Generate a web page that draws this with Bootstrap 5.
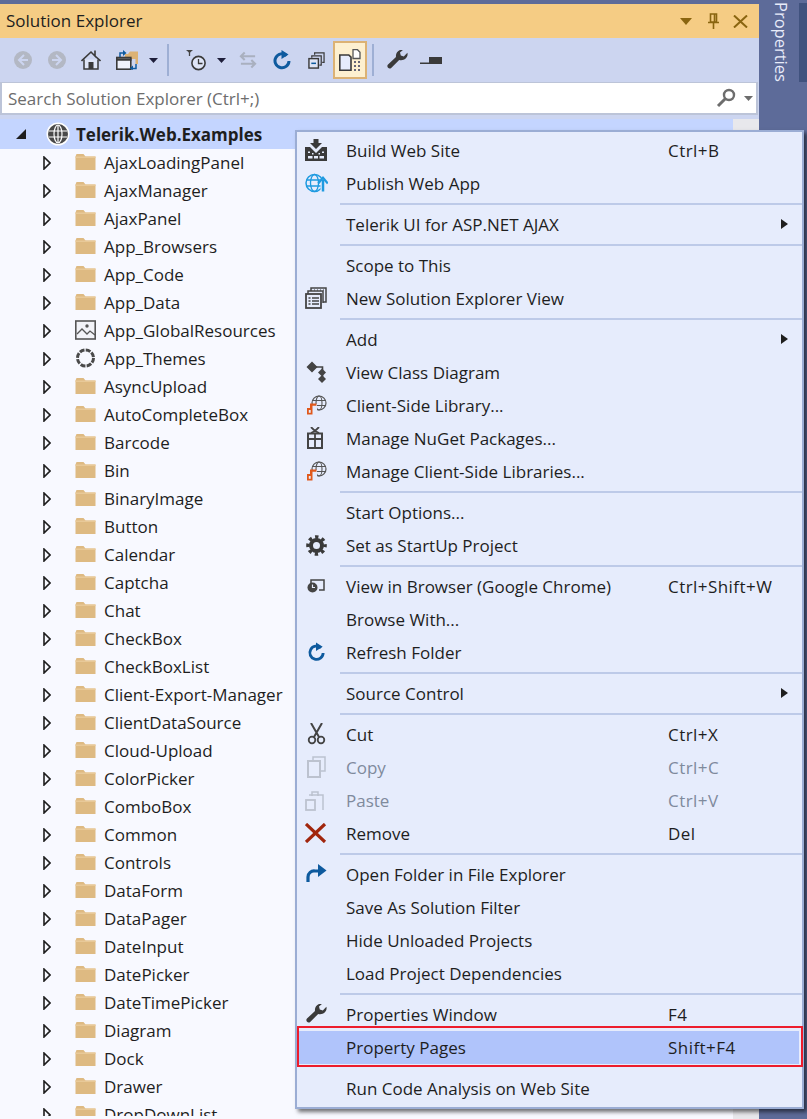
<!DOCTYPE html>
<html lang="en">
<head>
<meta charset="utf-8">
<title>Solution Explorer</title>
<link href="https://cdn.jsdelivr.net/npm/bootstrap@5.3.0/dist/css/bootstrap.min.css" rel="stylesheet">
<style>
html,body{margin:0;height:1119px;overflow:hidden;background:#5d6b99}
body{font-family:"Open Sans","Noto Sans","Liberation Sans",sans-serif;font-size:17px;color:#1e1e1e}
.stage{width:807px;height:1119px;position:relative;overflow:hidden;background:#5d6b99;padding-top:4px}
.panel{width:759px;height:1115px;background:#f8f9ff}
.titlebar{height:34px;background:#f5cc84;padding:0 11px 0 6px}
.titlebar svg{display:block}
.toolbar{height:44px;background:#ccd5f0;padding-left:14px}
.toolbar svg,.tb-sep,.tb-on{flex:none}
.tb-sep{width:2px;height:32px;background:#9eafd4}
.tb-on{width:34px;height:38px;background:#fdf0d0;border:2px solid #dcb274}
.searchwrap{background:#ccd5f0;padding:0 1px 4px 0}
.searchbox{height:33px;background:#fff;border:2px solid #bcc4d8;border-top-width:1.500px;padding:0 3px 0 6px;color:#6d6d6d}
.searchbox .hint{padding-top:2px}
.treeroot{height:30px;background:#c4d5ff;font-weight:700;color:#1e1e1e;padding-left:16px}
.treeroot .rootname{padding-top:2px}
.treearea{height:967px;overflow:hidden}
.treerow{height:28px;white-space:nowrap;padding-left:43px}
.treerow svg.arrow{margin-right:24px;flex:none}
.treerow svg.fold{margin-right:8px;margin-top:-3px;flex:none}
.scrolltrack{position:absolute;left:733px;top:119px;width:26px;height:1000px;background:#e8e8ec}
.sidetab{position:absolute;left:763px;top:0;width:37px;height:82px;writing-mode:vertical-rl;color:#e8ecfa;font-size:16.500px;line-height:37px;white-space:nowrap;padding-top:2px}
.sidestrip{position:absolute;left:799px;top:3px;width:8px;height:79px;background:#40527e}
.ctxmenu{position:absolute;left:295px;top:130px;width:509px;height:979px;background:#e6ecfc;border:2px solid #9badd4;padding:1.500px 0 0 0;box-shadow:3px 3px 4px rgba(0,0,0,.55)}
.mi{height:33px;white-space:nowrap;line-height:33px;position:relative;color:#1e1e1e}
.mi .ico{width:47px;flex:none;padding-left:8px}
.mi .ico.inset1{padding-left:9px}
.mi .ico.inset{padding-left:10px}
.mi .lbl{width:322px;flex:none;margin-left:2px}
.mi .ks{flex:1;letter-spacing:.45px}
.mi .sub{position:absolute;right:14px;top:11.500px;width:0;height:0;border-left:7px solid #1e1e1e;border-top:5px solid transparent;border-bottom:5px solid transparent}
.mi.off{color:#7f8a9c}
.mi.hit{background:#b0c4fb;margin:0 3px 0 1px}
.mi.hit .ico{width:46px}
.msep{height:8px;padding:3px 0 3px 43px}
.msep div{height:2px;background:#bdcae8}
.redbox{position:absolute;left:0;top:894px;width:506px;height:41px;border:2px solid #ed1c2c;pointer-events:none}
</style>
</head>
<body>
<svg width="0" height="0" class="position-absolute">
<defs>
<symbol id="i-fold" viewBox="0 0 20 18"><path d="M0 3.500 1 1h7l2 2.500h10V17H0z" fill="#deba82"/><path d="M0 3.500h20v1.500H0z" fill="#e8c998"/></symbol>
<symbol id="i-arrow" viewBox="0 0 8 14"><path d="M1 1 7 7 1 13z" fill="none" stroke="#1e1e1e" stroke-width="1.600"/></symbol>
<symbol id="i-globe2" viewBox="0 0 20 20"><circle cx="12" cy="8" r="7" fill="#e6ecfc" stroke="#555" stroke-width="1.200"/><ellipse cx="12" cy="8" rx="3" ry="7" fill="none" stroke="#555" stroke-width="1.100"/><path d="M5 5.500h14M5 10.500h14" stroke="#555" stroke-width="1.100"/><path d="M0 9h10v11H0z" fill="#e6ecfc"/><path d="M0 13h3V8.500h6.500v2.200H5.500V19.500H0z" fill="#e0591c"/><path d="M1.800 15h1.900v2.800H1.800z" fill="#e6ecfc"/></symbol>
<symbol id="i-refresh" viewBox="0 0 20 20"><path d="M14.700 5.600A7 7 0 1 0 17 11" fill="none" stroke="#0e5a9e" stroke-width="3"/><path d="M9.500 0v9l7-4.500z" fill="#0e5a9e"/></symbol>
<symbol id="i-wrench" viewBox="0 0 21 20"><path d="M20.400 2.800l-3.600 3.600-3-.8-.8-3L16.500-.5C12-.9 8.300 2.500 9 7L1 14.500c-2 2 1 5.500 3.200 3.400L12.200 10c4.800 1.300 9.400-2.500 8.200-7.200z" fill="#3a3a3a"/></symbol>
</defs>
</svg>
<div class="stage">
  <div class="panel d-flex flex-column">
    <div class="titlebar d-flex align-items-center justify-content-between">
      <span>Solution Explorer</span>
      <span class="d-flex align-items-center">
        <svg width="12" height="7" viewBox="0 0 12 7" style="margin-right:16px"><path d="M0 0h12L6 7z" fill="#8a6510"/></svg>
        <svg width="11" height="16" viewBox="0 0 11 16" style="margin-right:14px"><path d="M2.500 1h6v8h-6zM6.500 1.500v7.500M0 9.500h11M5.500 10v6" fill="none" stroke="#8a6510" stroke-width="1.600"/></svg>
        <svg width="15" height="13" viewBox="0 0 15 13"><path d="M1 .5 14 12.500M14 .5 1 12.500" stroke="#8a6510" stroke-width="2"/></svg>
      </span>
    </div>
    <div class="toolbar d-flex align-items-center">
      <svg width="18" height="18" viewBox="0 0 18 18" style="margin-right:16px"><circle cx="9" cy="9" r="9" fill="#b3b8c4"/><path d="M10 4 5 9l5 5M5.500 9H14" fill="none" stroke="#ccd5f0" stroke-width="2"/></svg>
      <svg width="18" height="18" viewBox="0 0 18 18" style="margin-right:15px"><circle cx="9" cy="9" r="9" fill="#b3b8c4"/><path d="M8 4l5 5-5 5M12.500 9H4" fill="none" stroke="#ccd5f0" stroke-width="2"/></svg>
      <svg width="20" height="20" viewBox="0 0 20 20" style="margin-right:15px"><path d="M3 9.500V19h14V9.500" fill="#dfe5f6" stroke="#3a3a3a" stroke-width="1.500"/><path d="M.5 11 10 2l4 4V.5M14 6l5.500 5" fill="none" stroke="#3a3a3a" stroke-width="1.600"/><rect x="7.500" y="12" width="5" height="7" fill="#3a3a3a"/></svg>
      <svg width="22" height="20" viewBox="0 0 22 20" style="margin-right:11px"><path d="M9 4h3l2-2.500h8V14h-2.500V9H9z" fill="#dcb274"/><rect x=".8" y="7.500" width="14" height="11.700" fill="#eef1fa" stroke="#3a3a3a" stroke-width="1.600"/><path d="M.5 9.500h15" stroke="#3a3a3a" stroke-width="2.500"/><path d="M4 7V3h4" fill="none" stroke="#0e5a9e" stroke-width="1.500"/><path d="M7 0l3.500 3L7 6z" fill="#0e5a9e"/><path d="M20 14v4.500h-3.500" fill="none" stroke="#0e5a9e" stroke-width="1.500"/><path d="M17 15.500l-3.500 3 3.500 1.500z" fill="#0e5a9e"/></svg>
      <svg width="9" height="5" viewBox="0 0 9 5" style="margin-right:9px"><path d="M0 0h9L4.500 5z" fill="#1e1e3a"/></svg>
      <span class="tb-sep" style="margin-right:17px"></span>
      <svg width="20" height="21" viewBox="0 0 20 21" style="margin-right:11px"><path d="M0 0h7L3.500 3z" fill="#444"/><path d="M3.500 2v4" stroke="#444" stroke-width="1.300"/><circle cx="12.500" cy="13" r="6.600" fill="#dfe5f6" stroke="#3a3a3a" stroke-width="1.600"/><path d="M12.500 9v4.500h4" fill="none" stroke="#3a3a3a" stroke-width="1.300"/></svg>
      <svg width="9" height="5" viewBox="0 0 9 5" style="margin-right:13px"><path d="M0 0h9L4.500 5z" fill="#1e1e3a"/></svg>
      <svg width="18" height="18" viewBox="0 0 19 18" style="margin-right:16px"><path d="M6 1 2 5l4 4M2 5h15M13 9l4 4-4 4M17 13H2" fill="none" stroke="#a9b0bf" stroke-width="2.200"/></svg>
      <svg width="18" height="20" viewBox="1 0 18 20" style="margin-right:17px"><use href="#i-refresh" width="20" height="20"/></svg>
      <svg width="17" height="17" viewBox="0 0 18 18" style="margin-right:8px"><path d="M7 3V1h10v10h-2M4 6V4h10v10h-2" fill="none" stroke="#3a3a3a" stroke-width="1.300"/><rect x="1" y="7" width="10" height="10" fill="#dfe5f6" stroke="#3a3a3a" stroke-width="1.500"/><path d="M3.500 12h5" stroke="#0e5a9e" stroke-width="1.600"/></svg>
      <span class="tb-on d-flex align-items-center justify-content-center" style="margin-right:5px"><svg width="22" height="22" viewBox="0 0 22 22"><path d="M.8 6h9l2.200 2.200V21.200H.8z" fill="#e6ecfc" stroke="#3a3a3a" stroke-width="1.600"/><path d="M14 .7h4.500l2.500 2.500v6.300h-7z" fill="#fff" stroke="#555" stroke-width="1.300"/><path d="M15 12h2v2h-2zM19 12h2v2h-2zM15 16h2v2h-2zM19 16h2v2h-2zM15 20h2v2h-2zM19 20h2v2h-2z" fill="#667"/></svg></span>
      <span class="tb-sep" style="margin-right:13px"></span>
      <svg width="21" height="20" viewBox="0 0 21 20" style="margin-right:12px"><use href="#i-wrench"/></svg>
      <svg width="22" height="7" viewBox="0 0 22 7"><path d="M0 5.500h22V7H0z" fill="#3a3a3a"/><path d="M9 0h13v7H9z" fill="#3a3a3a"/></svg>
    </div>
    <div class="searchwrap">
      <div class="searchbox d-flex align-items-center justify-content-between">
        <span class="hint">Search Solution Explorer (Ctrl+;)</span>
        <span class="d-flex align-items-center">
          <svg width="20" height="20" viewBox="0 0 20 20" style="margin-right:8px"><circle cx="13" cy="7" r="5" fill="none" stroke="#6d6d6d" stroke-width="2.400"/><path d="M9.500 10.500 2 18" stroke="#6d6d6d" stroke-width="3"/></svg>
          <svg width="9" height="5" viewBox="0 0 9 5"><path d="M0 0h9L4.500 5z" fill="#6d6d6d"/></svg>
        </span>
      </div>
    </div>
    <div class="treeroot d-flex align-items-center">
      <svg width="10" height="10" viewBox="0 0 10 10" style="margin-right:20px"><path d="M10 0v10H0z" fill="#1e1e1e"/></svg>
      <svg width="24" height="24" viewBox="0 0 24 24" style="margin-right:6px"><circle cx="12" cy="12" r="11.500" fill="#fff"/><circle cx="12" cy="12" r="10" fill="#4a4a4a"/><ellipse cx="12" cy="12" rx="4" ry="9" fill="none" stroke="#fff" stroke-width="1.200"/><path d="M3 9h18M3 15h18M12 3v18" stroke="#fff" stroke-width="1.200"/></svg>
      <span class="rootname">Telerik.Web.Examples</span>
    </div>
    <div class="treearea">
      <div class="treerow d-flex align-items-center"><svg class="arrow" width="8" height="14"><use href="#i-arrow"/></svg><svg class="fold" width="21" height="18"><use href="#i-fold"/></svg><span>AjaxLoadingPanel</span></div>
      <div class="treerow d-flex align-items-center"><svg class="arrow" width="8" height="14"><use href="#i-arrow"/></svg><svg class="fold" width="21" height="18"><use href="#i-fold"/></svg><span>AjaxManager</span></div>
      <div class="treerow d-flex align-items-center"><svg class="arrow" width="8" height="14"><use href="#i-arrow"/></svg><svg class="fold" width="21" height="18"><use href="#i-fold"/></svg><span>AjaxPanel</span></div>
      <div class="treerow d-flex align-items-center"><svg class="arrow" width="8" height="14"><use href="#i-arrow"/></svg><svg class="fold" width="21" height="18"><use href="#i-fold"/></svg><span>App_Browsers</span></div>
      <div class="treerow d-flex align-items-center"><svg class="arrow" width="8" height="14"><use href="#i-arrow"/></svg><svg class="fold" width="21" height="18"><use href="#i-fold"/></svg><span>App_Code</span></div>
      <div class="treerow d-flex align-items-center"><svg class="arrow" width="8" height="14"><use href="#i-arrow"/></svg><svg class="fold" width="21" height="18"><use href="#i-fold"/></svg><span>App_Data</span></div>
      <div class="treerow d-flex align-items-center"><svg class="arrow" width="8" height="14"><use href="#i-arrow"/></svg><svg class="fold" width="21" height="20" viewBox="0 0 21 20"><rect x=".8" y="1" width="19.400" height="18" fill="#f2f3f8" stroke="#555" stroke-width="1.600"/><circle cx="12" cy="6" r="1.700" fill="#555"/><path d="M2 14l5-5 5 5 3-3 5 4" fill="none" stroke="#555" stroke-width="1.300"/></svg><span>App_GlobalResources</span></div>
      <div class="treerow d-flex align-items-center"><svg class="arrow" width="8" height="14"><use href="#i-arrow"/></svg><svg class="fold" width="21" height="20" viewBox="0 0 21 20"><circle cx="10.500" cy="10" r="8" fill="#f8f9ff" stroke="#4a4a4a" stroke-width="3" stroke-dasharray="5 1.280"/></svg><span>App_Themes</span></div>
      <div class="treerow d-flex align-items-center"><svg class="arrow" width="8" height="14"><use href="#i-arrow"/></svg><svg class="fold" width="21" height="18"><use href="#i-fold"/></svg><span>AsyncUpload</span></div>
      <div class="treerow d-flex align-items-center"><svg class="arrow" width="8" height="14"><use href="#i-arrow"/></svg><svg class="fold" width="21" height="18"><use href="#i-fold"/></svg><span>AutoCompleteBox</span></div>
      <div class="treerow d-flex align-items-center"><svg class="arrow" width="8" height="14"><use href="#i-arrow"/></svg><svg class="fold" width="21" height="18"><use href="#i-fold"/></svg><span>Barcode</span></div>
      <div class="treerow d-flex align-items-center"><svg class="arrow" width="8" height="14"><use href="#i-arrow"/></svg><svg class="fold" width="21" height="18"><use href="#i-fold"/></svg><span>Bin</span></div>
      <div class="treerow d-flex align-items-center"><svg class="arrow" width="8" height="14"><use href="#i-arrow"/></svg><svg class="fold" width="21" height="18"><use href="#i-fold"/></svg><span>BinaryImage</span></div>
      <div class="treerow d-flex align-items-center"><svg class="arrow" width="8" height="14"><use href="#i-arrow"/></svg><svg class="fold" width="21" height="18"><use href="#i-fold"/></svg><span>Button</span></div>
      <div class="treerow d-flex align-items-center"><svg class="arrow" width="8" height="14"><use href="#i-arrow"/></svg><svg class="fold" width="21" height="18"><use href="#i-fold"/></svg><span>Calendar</span></div>
      <div class="treerow d-flex align-items-center"><svg class="arrow" width="8" height="14"><use href="#i-arrow"/></svg><svg class="fold" width="21" height="18"><use href="#i-fold"/></svg><span>Captcha</span></div>
      <div class="treerow d-flex align-items-center"><svg class="arrow" width="8" height="14"><use href="#i-arrow"/></svg><svg class="fold" width="21" height="18"><use href="#i-fold"/></svg><span>Chat</span></div>
      <div class="treerow d-flex align-items-center"><svg class="arrow" width="8" height="14"><use href="#i-arrow"/></svg><svg class="fold" width="21" height="18"><use href="#i-fold"/></svg><span>CheckBox</span></div>
      <div class="treerow d-flex align-items-center"><svg class="arrow" width="8" height="14"><use href="#i-arrow"/></svg><svg class="fold" width="21" height="18"><use href="#i-fold"/></svg><span>CheckBoxList</span></div>
      <div class="treerow d-flex align-items-center"><svg class="arrow" width="8" height="14"><use href="#i-arrow"/></svg><svg class="fold" width="21" height="18"><use href="#i-fold"/></svg><span>Client-Export-Manager</span></div>
      <div class="treerow d-flex align-items-center"><svg class="arrow" width="8" height="14"><use href="#i-arrow"/></svg><svg class="fold" width="21" height="18"><use href="#i-fold"/></svg><span>ClientDataSource</span></div>
      <div class="treerow d-flex align-items-center"><svg class="arrow" width="8" height="14"><use href="#i-arrow"/></svg><svg class="fold" width="21" height="18"><use href="#i-fold"/></svg><span>Cloud-Upload</span></div>
      <div class="treerow d-flex align-items-center"><svg class="arrow" width="8" height="14"><use href="#i-arrow"/></svg><svg class="fold" width="21" height="18"><use href="#i-fold"/></svg><span>ColorPicker</span></div>
      <div class="treerow d-flex align-items-center"><svg class="arrow" width="8" height="14"><use href="#i-arrow"/></svg><svg class="fold" width="21" height="18"><use href="#i-fold"/></svg><span>ComboBox</span></div>
      <div class="treerow d-flex align-items-center"><svg class="arrow" width="8" height="14"><use href="#i-arrow"/></svg><svg class="fold" width="21" height="18"><use href="#i-fold"/></svg><span>Common</span></div>
      <div class="treerow d-flex align-items-center"><svg class="arrow" width="8" height="14"><use href="#i-arrow"/></svg><svg class="fold" width="21" height="18"><use href="#i-fold"/></svg><span>Controls</span></div>
      <div class="treerow d-flex align-items-center"><svg class="arrow" width="8" height="14"><use href="#i-arrow"/></svg><svg class="fold" width="21" height="18"><use href="#i-fold"/></svg><span>DataForm</span></div>
      <div class="treerow d-flex align-items-center"><svg class="arrow" width="8" height="14"><use href="#i-arrow"/></svg><svg class="fold" width="21" height="18"><use href="#i-fold"/></svg><span>DataPager</span></div>
      <div class="treerow d-flex align-items-center"><svg class="arrow" width="8" height="14"><use href="#i-arrow"/></svg><svg class="fold" width="21" height="18"><use href="#i-fold"/></svg><span>DateInput</span></div>
      <div class="treerow d-flex align-items-center"><svg class="arrow" width="8" height="14"><use href="#i-arrow"/></svg><svg class="fold" width="21" height="18"><use href="#i-fold"/></svg><span>DatePicker</span></div>
      <div class="treerow d-flex align-items-center"><svg class="arrow" width="8" height="14"><use href="#i-arrow"/></svg><svg class="fold" width="21" height="18"><use href="#i-fold"/></svg><span>DateTimePicker</span></div>
      <div class="treerow d-flex align-items-center"><svg class="arrow" width="8" height="14"><use href="#i-arrow"/></svg><svg class="fold" width="21" height="18"><use href="#i-fold"/></svg><span>Diagram</span></div>
      <div class="treerow d-flex align-items-center"><svg class="arrow" width="8" height="14"><use href="#i-arrow"/></svg><svg class="fold" width="21" height="18"><use href="#i-fold"/></svg><span>Dock</span></div>
      <div class="treerow d-flex align-items-center"><svg class="arrow" width="8" height="14"><use href="#i-arrow"/></svg><svg class="fold" width="21" height="18"><use href="#i-fold"/></svg><span>Drawer</span></div>
      <div class="treerow d-flex align-items-center"><svg class="arrow" width="8" height="14"><use href="#i-arrow"/></svg><svg class="fold" width="21" height="18"><use href="#i-fold"/></svg><span>DropDownList</span></div>
    </div>
  </div>
  <div class="scrolltrack"></div>
  <div class="sidetab">Properties</div>
  <div class="sidestrip"></div>

  <div class="ctxmenu">
    <div class="mi d-flex align-items-center"><span class="ico d-flex"><svg width="22" height="22" viewBox="0 0 22 22"><path d="M8.500 0h5v4h3.500L11 10 5 4h3.500zM0 8h5l6 6 6-6h5v14H0z" fill="#3a3a3a"/><path d="M3 12.500h2v1.500H3zM7 14h1.500v1.500H7zM13.500 14H15v1.500h-1.500zM17 12.500h2v1.500h-2z" fill="#e6ecfc"/><path d="M3 17h4.500v2.500H3zM9 17h4v2.500H9zM14.500 17H19v2.500h-4.500z" fill="#e6ecfc"/></svg></span><span class="lbl">Build Web Site</span><span class="ks">Ctrl+B</span></div>
    <div class="mi d-flex align-items-center"><span class="ico d-flex"><svg width="23" height="20" viewBox="0 0 23 20"><circle cx="9.500" cy="10" r="8.500" fill="none" stroke="#1e9ae0" stroke-width="1.500"/><ellipse cx="9.500" cy="10" rx="4" ry="8.500" fill="none" stroke="#1e9ae0" stroke-width="1.300"/><path d="M1.500 7h16M1.500 13h16" stroke="#1e9ae0" stroke-width="1.300"/><path d="M18 19V6" stroke="#e6ecfc" stroke-width="5"/><path d="M18 18.500V7" stroke="#1e9ae0" stroke-width="2.500"/><path d="M13.200 10.500 18 4.800l4.800 5.700" fill="none" stroke="#1e9ae0" stroke-width="2.200"/></svg></span><span class="lbl">Publish Web App</span></div>
    <div class="msep"><div></div></div>
    <div class="mi d-flex align-items-center"><span class="ico"></span><span class="lbl">Telerik UI for ASP.NET AJAX</span><i class="sub"></i></div>
    <div class="msep"><div></div></div>
    <div class="mi d-flex align-items-center"><span class="ico"></span><span class="lbl">Scope to This</span></div>
    <div class="mi d-flex align-items-center"><span class="ico d-flex"><svg width="22" height="22" viewBox="0 0 22 22"><path d="M6 4V1h15v14h-3M3 7V4h15v12" fill="none" stroke="#444" stroke-width="1.500"/><path d="M9 3h1M12 3h1M15 3h1M18 3h1" stroke="#444"/><rect x="1" y="7" width="15" height="14" fill="#e6ecfc" stroke="#444" stroke-width="1.800"/><path d="M3.500 11h2M7 11h7M3.500 14h2M7 14h7M3.500 17h2M7 17h7" stroke="#444" stroke-width="1.300"/></svg></span><span class="lbl">New Solution Explorer View</span></div>
    <div class="msep"><div></div></div>
    <div class="mi d-flex align-items-center"><span class="ico"></span><span class="lbl">Add</span><i class="sub"></i></div>
    <div class="mi d-flex align-items-center"><span class="ico inset1 d-flex"><svg width="21" height="22" viewBox="0 0 21 22"><path d="M10 6h6.500v12" fill="none" stroke="#444" stroke-width="1.600"/><path d="M6 .5 11.500 6 6 11.500.5 6zM16 7.500l4 4-4 4-4-4zM16 14l4 4-4 4-4-4z" fill="#444"/></svg></span><span class="lbl">View Class Diagram</span></div>
    <div class="mi d-flex align-items-center"><span class="ico inset d-flex"><svg width="20" height="20" viewBox="0 0 20 20"><use href="#i-globe2"/></svg></span><span class="lbl">Client-Side Library...</span></div>
    <div class="mi d-flex align-items-center"><span class="ico inset d-flex"><svg width="16" height="22" viewBox="0 0 16 22"><path d="M4 0l4 4 4-4M4 6l4-2 4 2" fill="none" stroke="#444" stroke-width="1.800"/><rect x="1" y="6.500" width="14" height="14.500" fill="none" stroke="#444" stroke-width="2"/><path d="M1 12h14M8 6v15" stroke="#444" stroke-width="1.800"/></svg></span><span class="lbl">Manage NuGet Packages...</span></div>
    <div class="mi d-flex align-items-center"><span class="ico inset d-flex"><svg width="20" height="20" viewBox="0 0 20 20"><use href="#i-globe2"/></svg></span><span class="lbl">Manage Client-Side Libraries...</span></div>
    <div class="msep"><div></div></div>
    <div class="mi d-flex align-items-center"><span class="ico"></span><span class="lbl">Start Options...</span></div>
    <div class="mi d-flex align-items-center"><span class="ico inset1 d-flex"><svg width="21" height="21" viewBox="0 0 21 21"><circle cx="10.500" cy="10.500" r="5.500" fill="none" stroke="#3a3a3a" stroke-width="4"/><circle cx="10.500" cy="10.500" r="8.500" fill="none" stroke="#3a3a3a" stroke-width="3.600" stroke-dasharray="3.300 3.375" stroke-dashoffset="1.650"/></svg></span><span class="lbl">Set as StartUp Project</span></div>
    <div class="msep"><div></div></div>
    <div class="mi d-flex align-items-center"><span class="ico inset d-flex"><svg width="18" height="14" viewBox="0 0 18 14"><path d="M4 5V1h13v10h-5" fill="none" stroke="#444" stroke-width="1.500"/><circle cx="5.500" cy="8.500" r="5" fill="#444"/><path d="M5.500 5.500v3h2.500" fill="none" stroke="#e6ecfc" stroke-width="1.200"/></svg></span><span class="lbl">View in Browser (Google Chrome)</span><span class="ks">Ctrl+Shift+W</span></div>
    <div class="mi d-flex align-items-center"><span class="ico"></span><span class="lbl">Browse With...</span></div>
    <div class="mi d-flex align-items-center"><span class="ico inset d-flex"><svg width="19" height="20"><use href="#i-refresh" width="19" height="20"/></svg></span><span class="lbl">Refresh Folder</span></div>
    <div class="msep"><div></div></div>
    <div class="mi d-flex align-items-center"><span class="ico"></span><span class="lbl">Source Control</span><i class="sub"></i></div>
    <div class="msep"><div></div></div>
    <div class="mi d-flex align-items-center"><span class="ico inset d-flex"><svg width="19" height="22" viewBox="0 0 19 22"><path d="M4 0l8 14M15 0 7 14" stroke="#444" stroke-width="2"/><circle cx="5" cy="17" r="3.300" fill="none" stroke="#444" stroke-width="1.800"/><circle cx="14" cy="17" r="3.300" fill="none" stroke="#444" stroke-width="1.800"/></svg></span><span class="lbl">Cut</span><span class="ks">Ctrl+X</span></div>
    <div class="mi off d-flex align-items-center"><span class="ico inset d-flex"><svg width="19" height="22" viewBox="0 0 19 22"><path d="M6 4V1h12v14h-4" fill="none" stroke="#bcc2cf" stroke-width="1.500"/><rect x="1" y="5" width="12" height="16" fill="none" stroke="#bcc2cf" stroke-width="2"/></svg></span><span class="lbl">Copy</span><span class="ks">Ctrl+C</span></div>
    <div class="mi off d-flex align-items-center"><span class="ico d-flex"><svg width="20" height="22" viewBox="0 0 20 22"><path d="M7 7V3h6v4M4 6h14v15" fill="none" stroke="#bcc2cf" stroke-width="1.500"/><rect x="1" y="11" width="9" height="10" fill="none" stroke="#bcc2cf" stroke-width="1.800"/></svg></span><span class="lbl">Paste</span><span class="ks">Ctrl+V</span></div>
    <div class="mi d-flex align-items-center"><span class="ico d-flex"><svg width="22" height="20" viewBox="0 0 22 20"><path d="M1 1 20 19M20 1 1 19" stroke="#a1260d" stroke-width="3.200"/></svg></span><span class="lbl">Remove</span><span class="ks">Del</span></div>
    <div class="msep"><div></div></div>
    <div class="mi d-flex align-items-center"><span class="ico d-flex"><svg width="22" height="20" viewBox="0 0 22 20"><path d="M15 7H10a6 6 0 0 0-7 6v5" fill="none" stroke="#0e5a9e" stroke-width="3.200"/><path d="M13 0l8.500 6.500L13 13z" fill="#0e5a9e"/></svg></span><span class="lbl">Open Folder in File Explorer</span></div>
    <div class="mi d-flex align-items-center"><span class="ico"></span><span class="lbl">Save As Solution Filter</span></div>
    <div class="mi d-flex align-items-center"><span class="ico"></span><span class="lbl">Hide Unloaded Projects</span></div>
    <div class="mi d-flex align-items-center"><span class="ico"></span><span class="lbl">Load Project Dependencies</span></div>
    <div class="msep"><div></div></div>
    <div class="mi d-flex align-items-center"><span class="ico inset1 d-flex"><svg width="21" height="20" viewBox="0 0 21 20"><use href="#i-wrench"/></svg></span><span class="lbl">Properties Window</span><span class="ks">F4</span></div>
    <div class="mi hit d-flex align-items-center"><span class="ico"></span><span class="lbl">Property Pages</span><span class="ks">Shift+F4</span></div>
    <div class="msep"></div>
    <div class="mi d-flex align-items-center"><span class="ico"></span><span class="lbl">Run Code Analysis on Web Site</span></div>
    <div class="redbox"></div>
  </div>
</div>
</body>
</html>
